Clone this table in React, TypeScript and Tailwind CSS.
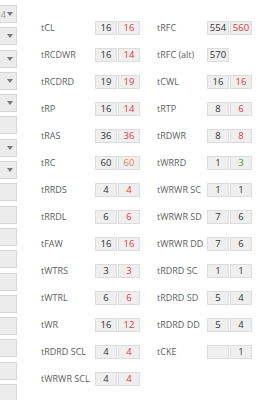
import React from "react"

type Row = { label: string; a: string; b?: string; bColor?: string }

const left: Row[] = [
  { label: "tCL", a: "16", b: "16", bColor: "text-[#e2383f]" },
  { label: "tRCDWR", a: "16", b: "14", bColor: "text-[#e2383f]" },
  { label: "tRCDRD", a: "19", b: "19", bColor: "text-[#e2383f]" },
  { label: "tRP", a: "16", b: "14", bColor: "text-[#e2383f]" },
  { label: "tRAS", a: "36", b: "36", bColor: "text-[#e2383f]" },
  { label: "tRC", a: "60", b: "60", bColor: "text-[#ee7a4f]" },
  { label: "tRRDS", a: "4", b: "4", bColor: "text-[#e2383f]" },
  { label: "tRRDL", a: "6", b: "6", bColor: "text-[#e2383f]" },
  { label: "tFAW", a: "16", b: "16", bColor: "text-[#e2383f]" },
  { label: "tWTRS", a: "3", b: "3", bColor: "text-[#e2383f]" },
  { label: "tWTRL", a: "6", b: "6", bColor: "text-[#e2383f]" },
  { label: "tWR", a: "16", b: "12", bColor: "text-[#e2383f]" },
  { label: "tRDRD SCL", a: "4", b: "4", bColor: "text-[#e2383f]" },
  { label: "tWRWR SCL", a: "4", b: "4", bColor: "text-[#e2383f]" },
]

const right: Row[] = [
  { label: "tRFC", a: "554", b: "560", bColor: "text-[#e2383f]" },
  { label: "tRFC (alt)", a: "570" },
  { label: "tCWL", a: "16", b: "16", bColor: "text-[#e2383f]" },
  { label: "tRTP", a: "8", b: "6", bColor: "text-[#e2383f]" },
  { label: "tRDWR", a: "8", b: "8", bColor: "text-[#e2383f]" },
  { label: "tWRRD", a: "1", b: "3", bColor: "text-[#3c9c45]" },
  { label: "tWRWR SC", a: "1", b: "1" },
  { label: "tWRWR SD", a: "7", b: "6" },
  { label: "tWRWR DD", a: "7", b: "6" },
  { label: "tRDRD SC", a: "1", b: "1" },
  { label: "tRDRD SD", a: "5", b: "4" },
  { label: "tRDRD DD", a: "5", b: "4" },
  { label: "tCKE", a: "", b: "1" },
]

// which of the cut-off boxes on the left edge are dropdowns
const strip = [1, 1, 1, 1, 1, 0, 1, 1, 0, 0, 0, 0, 0, 0, 0, 0, 0, 0]

function Box({ value, color }: { value: string; color?: string }) {
  return (
    <div
      className={`w-[22px] h-[14px] flex items-center justify-center bg-[#efefef] border border-[#dcdcdc] leading-none text-[9.5px] ${
        color ?? "text-[#333]"
      }`}
    >
      {value}
    </div>
  )
}

function Cell({ row, labelW }: { row?: Row; labelW: string }) {
  if (!row) return null
  return (
    <div className="flex items-center">
      <div className={`${labelW} text-[#606060] text-[9px] whitespace-nowrap`}>{row.label}</div>
      <div className="flex gap-[1px]">
        <Box value={row.a} />
        {row.b !== undefined && <Box value={row.b} color={row.bColor} />}
      </div>
    </div>
  )
}

export default function App() {
  return (
    <div className="w-[271px] h-[400px] overflow-hidden bg-white flex font-['Open_Sans',sans-serif]">
      {/* cut-off inputs of the panel on the left */}
      <div className="w-[17px] shrink-0 overflow-hidden flex flex-col gap-[4.3px] pt-[5px]">
        {strip.map((d, i) => (
          <div
            key={i}
            className="w-[40px] h-[18px] shrink-0 ml-[-23px] bg-[#ececec] border border-[#d6d6d6] flex items-center justify-end pr-[3px] gap-[1px]"
          >
            {i === 0 && <span className="text-[#999] text-[9px] leading-none">4</span>}
            {d === 1 && (
              <svg width="6" height="4" viewBox="0 0 6 4">
                <path d="M0 0h6L3 4z" fill="#7a7a7a" />
              </svg>
            )}
          </div>
        ))}
      </div>

      <div className="flex flex-col pt-[14px] pl-[24px]">
        {left.map((row, i) => (
          <div key={row.label} className="h-[27px] flex items-center">
            <div className="w-[116px]">
              <Cell row={row} labelW="w-[54px]" />
            </div>
            <Cell row={right[i]} labelW="w-[50px]" />
          </div>
        ))}
      </div>
    </div>
  )
}
